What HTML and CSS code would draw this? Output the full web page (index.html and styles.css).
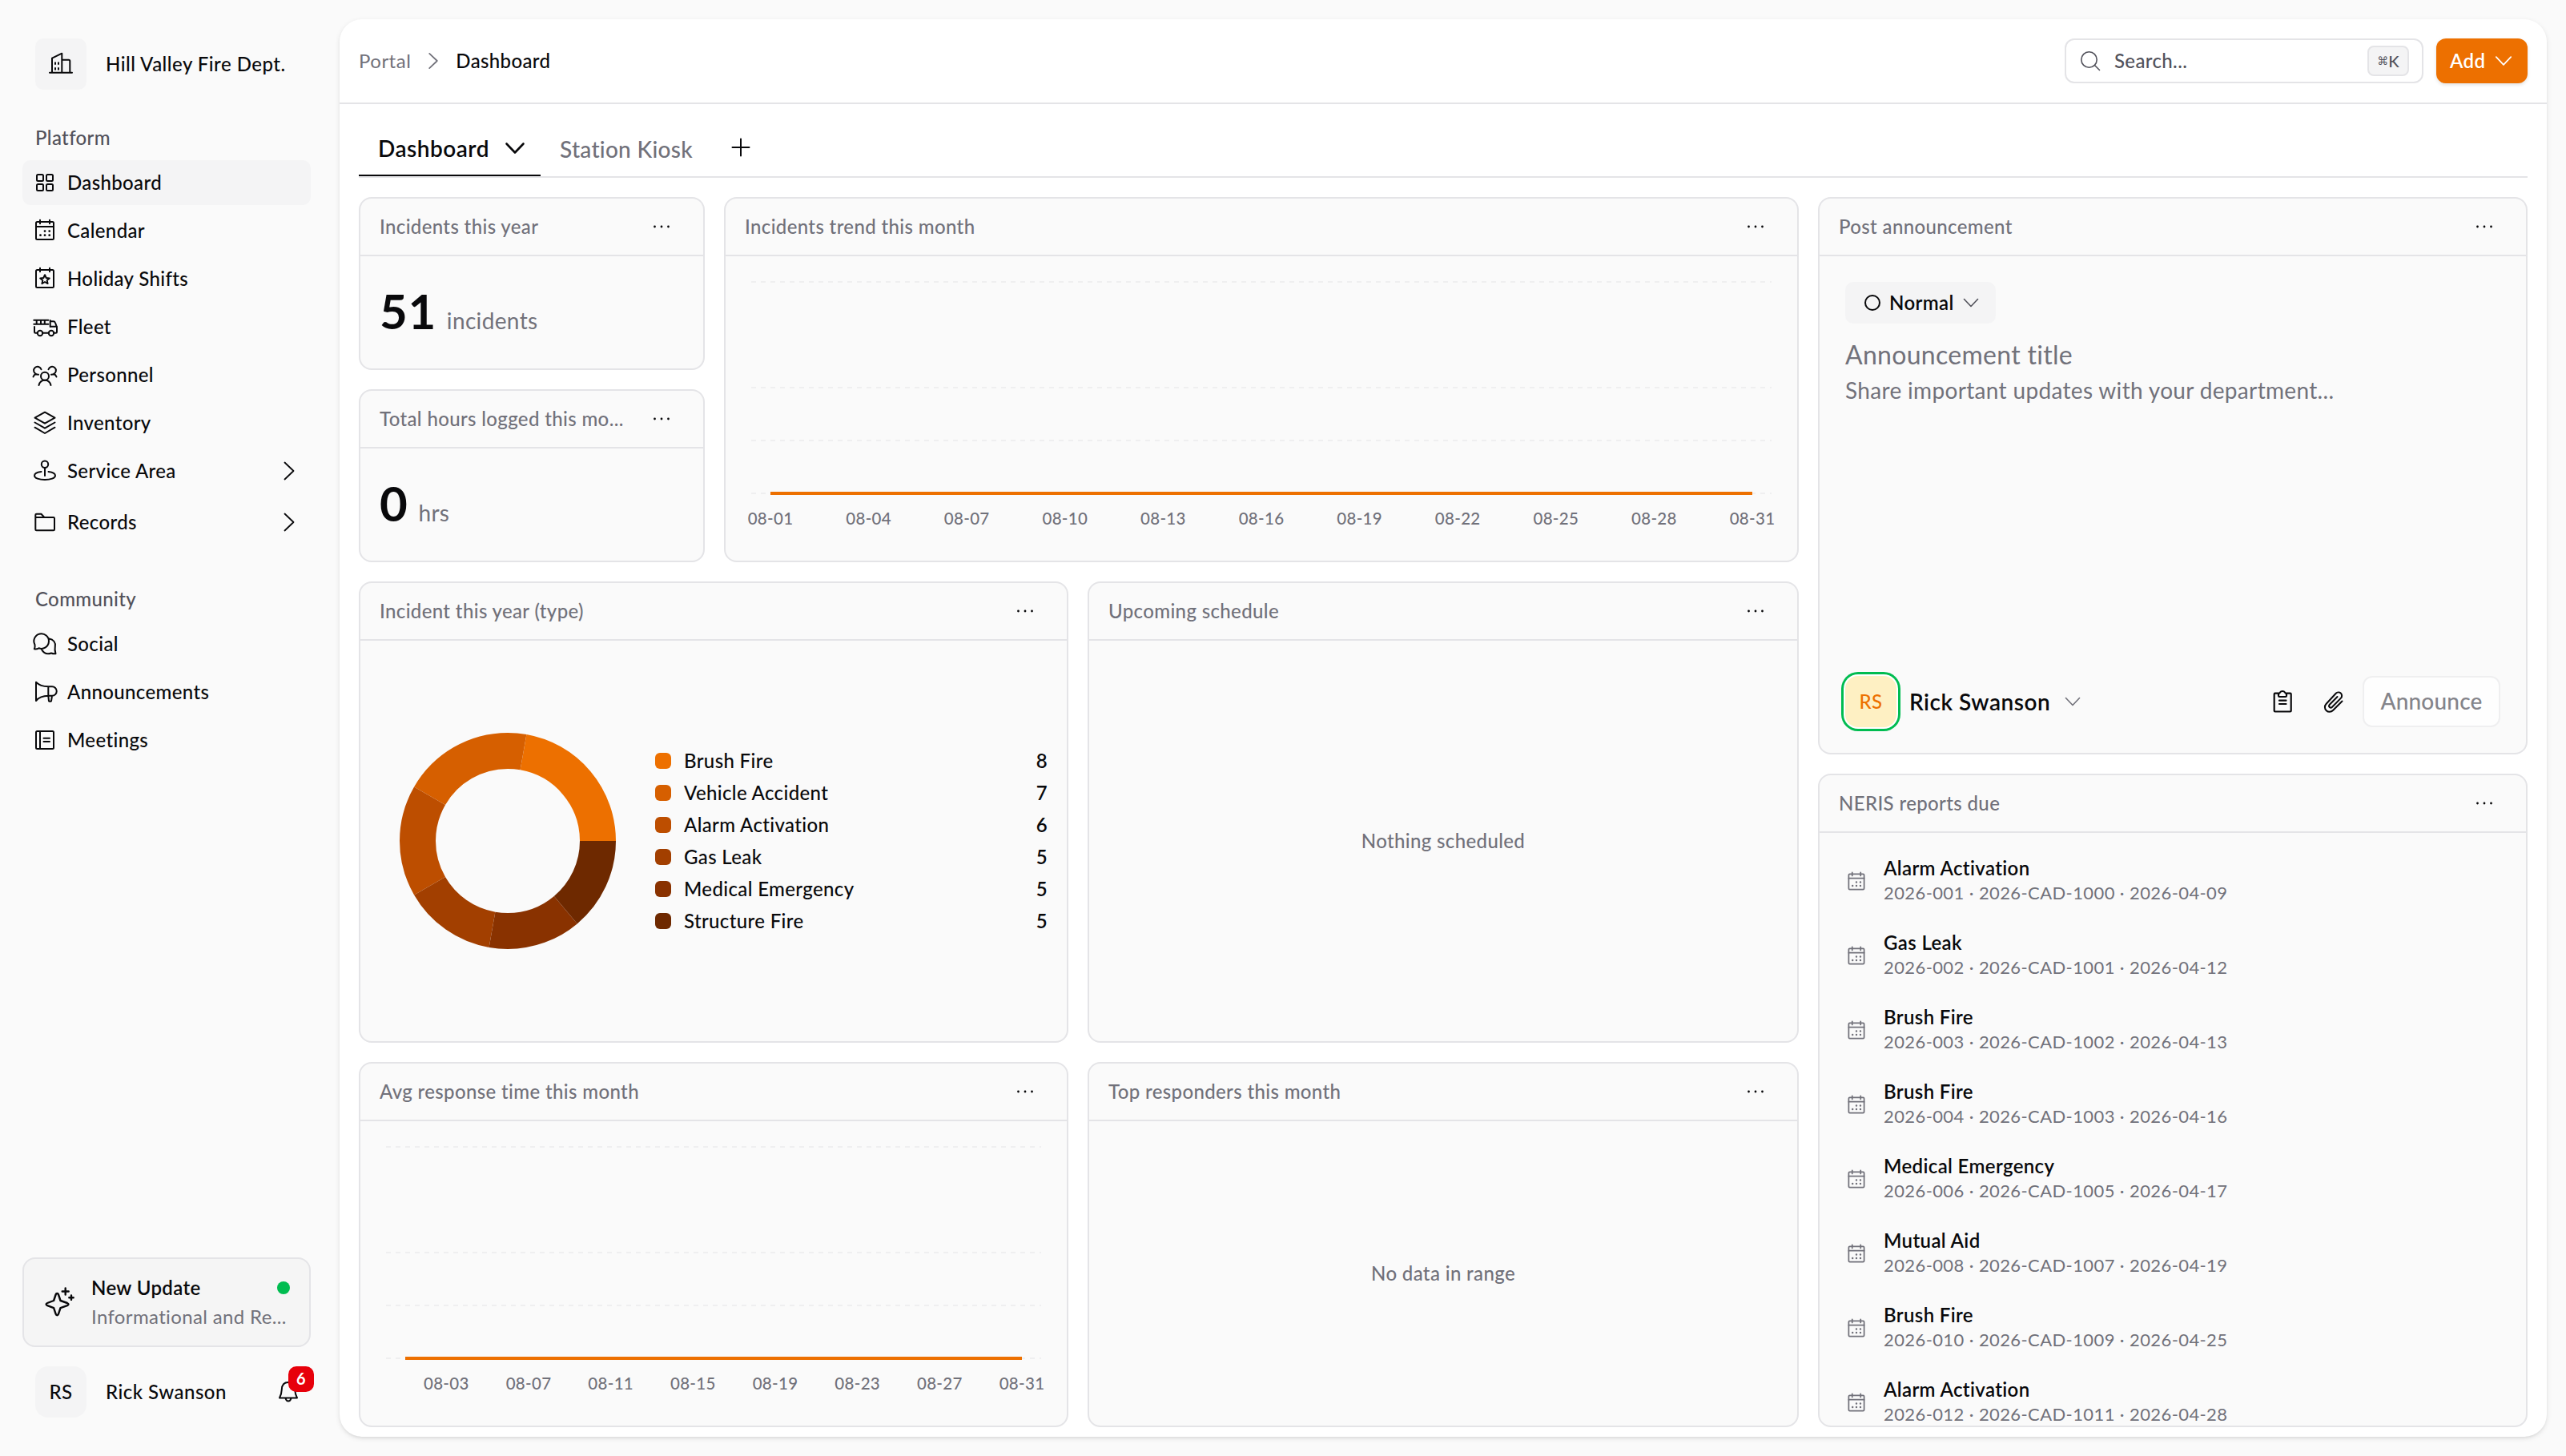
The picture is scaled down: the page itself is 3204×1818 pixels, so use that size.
FILE: index.html
```html
<!DOCTYPE html>
<html lang="en">
<head>
  <meta charset="UTF-8">
  <title>Dashboard</title>
  <link rel="stylesheet" href="styles.css">
</head>
<body>
  <!-- icon sprites -->
  <svg class="sprites">
    <symbol id="calendar" viewBox="0 0 32 32">
      <rect x="5" y="5" width="22" height="22" rx="1.5"/>
      <path d="M5 11h22M10 2.7v4.6M22 2.7v4.6"/>
      <path class="dots" d="M10.5 21.7h.01M16 21.7h.01M21.7 21.7h.01M16 16.6h.01M21.7 16.6h.01"/>
    </symbol>
    <symbol id="dots" viewBox="0 0 32 32">
      <path class="dots" d="M7.5 16h.01M16 16h.01M24.5 16h.01"/>
    </symbol>
    <symbol id="right" viewBox="0 0 32 32">
      <path d="M10.5 5.5L21.5 16l-11 10.5"/>
    </symbol>
    <symbol id="down" viewBox="0 0 32 32">
      <path d="M5.5 10.5L16 21.5l10.5-11"/>
    </symbol>
  </svg>

  <div class="sidebar">
    <div class="org">
      <div class="square">
        <svg class="icon" viewBox="0 0 32 32">
          <path d="M2 26.7h28M5 26.7v-18L17.3 2.7v24M17.3 10.7h8.5q1.5 0 1.5 1.5v14.5"/>
          <path d="M9 14.3v1.8M13 14.3v1.8M9 21v1.8M13 21v1.8"/>
        </svg>
      </div>
      <span>Hill Valley Fire Dept.</span>
    </div>

    <div class="group">Platform</div>
    <div class="nav">
      <a class="item active">
        <svg class="icon" viewBox="0 0 32 32"><rect x="6" y="6" width="8" height="8" rx="1.5"/><rect x="18" y="6" width="8" height="8" rx="1.5"/><rect x="6" y="18" width="8" height="8" rx="1.5"/><rect x="18" y="18" width="8" height="8" rx="1.5"/></svg>
        <span>Dashboard</span>
      </a>
      <a class="item"><svg class="icon"><use href="#calendar"/></svg><span>Calendar</span></a>
      <a class="item">
        <svg class="icon" viewBox="0 0 32 32"><rect x="5" y="5" width="22" height="22" rx="1.5"/><path d="M10 2.7v4.6M22 2.7v4.6"/><path d="M16 11.2l1.7 3.8 4.1.4-3.1 2.7.9 4-3.6-2.1-3.6 2.1.9-4-3.1-2.7 4.1-.4z"/></svg>
        <span>Holiday Shifts</span>
      </a>
      <a class="item">
        <svg class="icon" viewBox="0 0 32 32"><path d="M2.3 7.7h18M2.3 12.7h18M5.7 7.7v5M11 7.7v5M15.8 7.7v5M3 16v6.5q0 1.2 1.2 1.2h2.5M13.3 23.7h7.4M27.3 23.7h2.5q1.2 0 1.2-1.2v-6l-2-5.5q-.6-1.8-2.5-1.8h-3.8M22.7 8v8M22.7 15.7h8.3"/><circle cx="10" cy="24" r="3.2"/><circle cx="24" cy="24" r="3.2"/></svg>
        <span>Fleet</span>
      </a>
      <a class="item">
        <svg class="icon" viewBox="0 0 32 32"><circle cx="16" cy="17.7" r="5"/><path d="M8.5 29q1.5-6.3 7.5-6.3t7.5 6.3M11.500 9.200A4.800 4.800 0 1 0 5 15Q2.300 15.800 1.500 18.500M4.500 15.200l3.500.5M20.500 9.200A4.800 4.800 0 1 1 27 15q2.700.8 3.500 3.500M27.500 15.200l-3.500.5"/></svg>
        <span>Personnel</span>
      </a>
      <a class="item">
        <svg class="icon" viewBox="0 0 32 32"><path d="M16 2.7L28.5 9.7 16 16.7 3.5 9.7zM3.5 15.5L16 22.7l12.5-7.2M3.5 21.7L16 29l12.5-7.3"/></svg>
        <span>Inventory</span>
      </a>
      <a class="item">
        <svg class="icon" viewBox="0 0 32 32"><circle cx="16" cy="7.7" r="4.2"/><path d="M16 12v10M11.5 17C6 17.7 3 19.7 3 22c0 3 6 5 13 5s13-2 13-5c0-2.300-3-4.300-8.500-5"/></svg>
        <span>Service Area</span>
        <svg class="icon caret"><use href="#right"/></svg>
      </a>
      <a class="item folder">
        <svg class="icon" viewBox="0 0 32 32"><path d="M4.3 25V7q0-1.3 1.3-1.3h5.8l4 4.3h11.3q1.3 0 1.3 1.3V25q0 1.3-1.3 1.3H5.600q-1.300 0-1.300-1.300zM4.300 10h11"/></svg>
        <span>Records</span>
        <svg class="icon caret"><use href="#right"/></svg>
      </a>
    </div>

    <div class="group community">Community</div>
    <div class="nav">
      <a class="item">
        <svg class="icon" viewBox="0 0 32 32"><path d="M3.5 17A9.3 9.3 0 1 1 8.5 21.3Q5.5 23 2.8 22.3 4 20 3.5 17zM21.5 9.5c5 .5 8.3 5 7.3 9.7q-.8 4 .7 9-2.7.5-5.5-.7-8 3-12.3-5"/></svg>
        <span>Social</span>
      </a>
      <a class="item">
        <svg class="icon" viewBox="0 0 32 32"><path d="M5 3.7Q10 9.3 20.3 9.3H25a5.7 5.7 0 0 1 0 11.5h-4.700Q10 21 5 27zM20.300 9.300v11.500L21 27.300q1.500.8 3 0L25 20.800"/></svg>
        <span>Announcements</span>
      </a>
      <a class="item">
        <svg class="icon" viewBox="0 0 32 32"><rect x="5" y="5" width="22" height="22" rx="1.5"/><path d="M10 5v22M14.5 13.7h7.5M14.5 18h7.5"/></svg>
        <span>Meetings</span>
      </a>
    </div>

    <div class="update">
      <svg class="sparkle" viewBox="0 0 38 38"><path d="M15.3 8q1.2 0 1.7 1.5l2.5 7.5 8.5 3q1.5.6 1.5 1.6t-1.5 1.6l-8.5 3-2.5 7.5q-.5 1.5-1.7 1.5t-1.7-1.5l-2.5-7.5-8-3q-1.5-.6-1.5-1.6t1.5-1.6l8-3 2.5-7.5q.5-1.5 1.7-1.5zM25.7 1.5v8M21.7 5.5h8M33 10.5v5.4M30.3 13.2h5.4"/></svg>
      <div class="update-text">
        <div class="update-title">New Update<i class="green"></i></div>
        <div class="update-sub">Informational and Re...</div>
      </div>
    </div>

    <div class="user">
      <div class="square">RS</div>
      <span>Rick Swanson</span>
      <div class="bell">
        <svg class="icon" viewBox="0 0 32 32"><path d="M5 23.5Q7.500 19 7.800 13C8 7.500 11 4 16 4s8 3.500 8.200 9q.3 6 2.800 10.500zM12.500 24q1 3.500 3.500 3.500t3.500-3.500"/></svg>
        <div class="badge">6</div>
      </div>
    </div>
  </div>

  <div class="main">
    <div class="header">
      <span class="muted">Portal</span>
      <svg class="icon crumb"><use href="#right"/></svg>
      <span>Dashboard</span>
      <div class="search">
        <svg class="icon" viewBox="0 0 32 32"><circle cx="14.5" cy="14.5" r="9.7"/><path d="M21.5 21.5l6 6"/></svg>
        <span>Search...</span>
        <kbd><i>⌘</i>K</kbd>
      </div>
      <div class="add">Add <svg class="icon"><use href="#down"/></svg></div>
    </div>

    <div class="tabs">
      <div class="tab selected">Dashboard <svg class="icon"><use href="#down"/></svg></div>
      <div class="tab">Station Kiosk</div>
      <svg class="icon plus" viewBox="0 0 32 32"><path d="M16 5.5v21M5.5 16h21"/></svg>
    </div>

    <div class="grid">
      <div class="card stat">
        <div class="card-head"><span>Incidents this year</span><svg class="icon"><use href="#dots"/></svg></div>
        <div class="card-body"><b>51</b><span>incidents</span></div>
      </div>

      <div class="card trend">
        <div class="card-head"><span>Incidents trend this month</span><svg class="icon"><use href="#dots"/></svg></div>
        <svg class="chart" viewBox="0 0 1338 380" width="1338" height="380">
          <path class="gridline" d="M32 32H1306M32 164H1306M32 230H1306M32 296H1306"/>
          <path class="series" d="M56 296H1282"/>
          <g class="ticks">
            <text x="56" y="335">08-01</text>
            <text x="178.6" y="335">08-04</text>
            <text x="301.2" y="335">08-07</text>
            <text x="423.8" y="335">08-10</text>
            <text x="546.4" y="335">08-13</text>
            <text x="669" y="335">08-16</text>
            <text x="791.6" y="335">08-19</text>
            <text x="914.2" y="335">08-22</text>
            <text x="1036.8" y="335">08-25</text>
            <text x="1159.4" y="335">08-28</text>
            <text x="1282" y="335">08-31</text>
          </g>
        </svg>
      </div>

      <div class="card post">
        <div class="card-head"><span>Post announcement</span><svg class="icon"><use href="#dots"/></svg></div>
        <div class="post-body">
          <div class="pill"><i class="ring"></i>Normal <svg class="icon"><use href="#down"/></svg></div>
          <div class="post-title">Announcement title</div>
          <div class="post-text">Share important updates with your department...</div>
          <div class="post-foot">
            <div class="avatar">RS</div>
            <span class="author">Rick Swanson</span>
            <svg class="icon author-caret"><use href="#down"/></svg>
            <svg class="icon clipboard" viewBox="0 0 32 32"><path d="M11 5.7H6.7q-1 0-1 1V27.5q0 1 1 1h19q1 0 1-1V6.7q0-1-1-1H21M11 6q1.3 0 2-1.5 1-1.5 3-1.5t3 1.5Q19.700 6 21 6v2.700q0 1.300-1.300 1.300h-7.400Q11 10 11 8.700zM12 14.700h8.500M12 19h8.500"/></svg>
            <svg class="icon clip" viewBox="0 0 32 32"><path d="M26.5 15.5L15 27a5.800 5.800 0 0 1-8.500-8L18.700 5.800a4.200 4.200 0 0 1 6.300 5.800L13.800 23a2.200 2.200 0 0 1-3.200-3L20.500 10"/></svg>
            <div class="announce">Announce</div>
          </div>
        </div>
      </div>

      <div class="card stat">
        <div class="card-head"><span>Total hours logged this mo...</span><svg class="icon"><use href="#dots"/></svg></div>
        <div class="card-body"><b>0</b><span>hrs</span></div>
      </div>

      <div class="card tall">
        <div class="card-head"><span>Incident this year (type)</span><svg class="icon"><use href="#dots"/></svg></div>
        <div class="card-body donut-body">
          <!-- arcs are shares of 36 incidents, drawn from 3 o'clock anticlockwise -->
          <svg class="donut" viewBox="-160 -160 320 320" width="320" height="320">
            <g transform="scale(1 -1)">
              <circle r="112.5" pathLength="36" stroke="#ed7000" stroke-dasharray="8 28"/>
              <circle r="112.5" pathLength="36" stroke="#d65f00" stroke-dasharray="7 29" stroke-dashoffset="-8"/>
              <circle r="112.5" pathLength="36" stroke="#bd4e00" stroke-dasharray="6 30" stroke-dashoffset="-15"/>
              <circle r="112.5" pathLength="36" stroke="#a23f00" stroke-dasharray="5 31" stroke-dashoffset="-21"/>
              <circle r="112.5" pathLength="36" stroke="#893200" stroke-dasharray="5 31" stroke-dashoffset="-26"/>
              <circle r="112.5" pathLength="36" stroke="#6e2900" stroke-dasharray="5 31" stroke-dashoffset="-31"/>
            </g>
          </svg>
          <div class="legend">
            <div><i style="background: #ed7000"></i>Brush Fire<span>8</span></div>
            <div><i style="background: #d65f00"></i>Vehicle Accident<span>7</span></div>
            <div><i style="background: #bd4e00"></i>Alarm Activation<span>6</span></div>
            <div><i style="background: #a23f00"></i>Gas Leak<span>5</span></div>
            <div><i style="background: #893200"></i>Medical Emergency<span>5</span></div>
            <div><i style="background: #6e2900"></i>Structure Fire<span>5</span></div>
          </div>
        </div>
      </div>

      <div class="card tall">
        <div class="card-head"><span>Upcoming schedule</span><svg class="icon"><use href="#dots"/></svg></div>
        <div class="card-body empty">Nothing scheduled</div>
      </div>

      <div class="card reports">
        <div class="card-head"><span>NERIS reports due</span><svg class="icon"><use href="#dots"/></svg></div>
        <div class="report-list">
          <div class="report"><svg class="icon"><use href="#calendar"/></svg><div><b>Alarm Activation</b><p>2026-001 · 2026-CAD-1000 · 2026-04-09</p></div></div>
          <div class="report"><svg class="icon"><use href="#calendar"/></svg><div><b>Gas Leak</b><p>2026-002 · 2026-CAD-1001 · 2026-04-12</p></div></div>
          <div class="report"><svg class="icon"><use href="#calendar"/></svg><div><b>Brush Fire</b><p>2026-003 · 2026-CAD-1002 · 2026-04-13</p></div></div>
          <div class="report"><svg class="icon"><use href="#calendar"/></svg><div><b>Brush Fire</b><p>2026-004 · 2026-CAD-1003 · 2026-04-16</p></div></div>
          <div class="report"><svg class="icon"><use href="#calendar"/></svg><div><b>Medical Emergency</b><p>2026-006 · 2026-CAD-1005 · 2026-04-17</p></div></div>
          <div class="report"><svg class="icon"><use href="#calendar"/></svg><div><b>Mutual Aid</b><p>2026-008 · 2026-CAD-1007 · 2026-04-19</p></div></div>
          <div class="report"><svg class="icon"><use href="#calendar"/></svg><div><b>Brush Fire</b><p>2026-010 · 2026-CAD-1009 · 2026-04-25</p></div></div>
          <div class="report"><svg class="icon"><use href="#calendar"/></svg><div><b>Alarm Activation</b><p>2026-012 · 2026-CAD-1011 · 2026-04-28</p></div></div>
        </div>
      </div>

      <div class="card short">
        <div class="card-head"><span>Avg response time this month</span><svg class="icon"><use href="#dots"/></svg></div>
        <svg class="chart" viewBox="0 0 882 380" width="882" height="380">
          <path class="gridline" d="M32 32H850M32 164H850M32 230H850M32 296H850"/>
          <path class="series" d="M56 296H826"/>
          <g class="ticks">
            <text x="107.3" y="335">08-03</text>
            <text x="210" y="335">08-07</text>
            <text x="312.7" y="335">08-11</text>
            <text x="415.3" y="335">08-15</text>
            <text x="518" y="335">08-19</text>
            <text x="620.7" y="335">08-23</text>
            <text x="723.3" y="335">08-27</text>
            <text x="826" y="335">08-31</text>
          </g>
        </svg>
      </div>

      <div class="card short">
        <div class="card-head"><span>Top responders this month</span><svg class="icon"><use href="#dots"/></svg></div>
        <div class="card-body empty">No data in range</div>
      </div>
    </div>
  </div>
</body>
</html>
```
FILE: styles.css
```css
* {
  box-sizing: border-box;
}

body {
  margin: 0;
  width: 3204px;
  height: 1818px;
  display: flex;
  overflow: hidden;
  background: #fafafa;
  color: #09090b;
  font-family: Lato, sans-serif;
  font-size: 24px;
  font-weight: 500;
  line-height: 32px;
  letter-spacing: 0.36px;
}

.sprites {
  position: absolute;
  width: 0;
  height: 0;
}

.icon {
  width: 32px;
  height: 32px;
  flex: none;
}

svg {
  display: block;
  fill: none;
  stroke: currentColor;
  stroke-width: 2;
  stroke-linecap: round;
  stroke-linejoin: round;
}

.dots {
  stroke-width: 2.8;
}

.muted {
  color: #71717a;
}

/* sidebar */

.sidebar {
  width: 424px;
  padding: 48px 36px 48px 28px;
  display: flex;
  flex-direction: column;
}

.org,
.user {
  display: flex;
  align-items: center;
  padding-left: 16px;
  letter-spacing: 0.48px;
}

.org > span,
.user > span {
  margin-left: 24px;
}

.square {
  width: 64px;
  height: 64px;
  display: flex;
  align-items: center;
  justify-content: center;
  border-radius: 10px;
  background: #f4f4f5;
}

.group {
  margin: 42px 0 0 16px;
  height: 46px;
  line-height: 36px;
  color: #52525b;
}

.group.community {
  margin-top: 50px;
}

.nav {
  display: flex;
  flex-direction: column;
  gap: 4px;
}

.item {
  display: flex;
  align-items: center;
  height: 56px;
  padding: 0 12px;
  border-radius: 10px;
}

.item span {
  margin-left: 12px;
}

.item.active {
  background: #f4f4f5;
}

.item.folder {
  margin-top: 4px;
}

.caret {
  margin-left: auto;
  margin-right: -1px;
  stroke-width: 1.8;
}

.update {
  display: flex;
  align-items: center;
  height: 112px;
  margin-top: auto;
  padding: 0 16px 0 26px;
  border: 2px solid #e4e4e7;
  border-radius: 16px;
  background: #f5f5f5;
}

.sparkle {
  width: 38px;
  height: 38px;
  flex: none;
  stroke-width: 2.4;
}

.update-text {
  width: 250px;
  margin-left: 20px;
  line-height: 36px;
}

.update-title {
  display: flex;
  align-items: center;
  justify-content: space-between;
  font-weight: 600;
}

.green {
  width: 16px;
  height: 16px;
  margin: 0 2px 0 0;
  border-radius: 50%;
  background: #00bc50;
}

.update-sub {
  white-space: nowrap;
  color: #71717a;
  font-weight: 400;
}

.user {
  margin-top: 24px;
}

.user .square {
  border-radius: 16px;
}

.bell {
  position: relative;
  margin-left: auto;
  margin-right: 12px;
}

.badge {
  position: absolute;
  left: 16px;
  top: -16px;
  width: 32px;
  height: 32px;
  border-radius: 10px;
  background: #e7000b;
  color: #fff;
  font-size: 20px;
  font-weight: 700;
  line-height: 30px;
  text-align: center;
}

/* main panel */

.main {
  width: 2756px;
  height: 1770px;
  margin-top: 24px;
  border-radius: 28px;
  background: #fff;
  box-shadow: 0 2px 6px rgba(0, 0, 0, 0.1), 0 2px 4px -2px rgba(0, 0, 0, 0.1);
}

.header {
  display: flex;
  align-items: center;
  height: 106px;
  padding: 0 24px;
  border-bottom: 2px solid #e4e4e7;
}

.header .muted {
  font-weight: 400;
  letter-spacing: 0.5px;
}

.crumb {
  width: 28px;
  height: 28px;
  margin: 0 14px 0 14px;
  color: #71717a;
}

.search {
  display: flex;
  align-items: center;
  width: 448px;
  height: 56px;
  margin-left: auto;
  padding: 0 16px;
  border: 2px solid #e4e4e7;
  border-radius: 12px;
  color: #52525b;
}

.search .icon {
  margin-left: -2px;
  stroke-width: 1.6;
}

.search span {
  margin-left: 14px;
}

kbd {
  display: flex;
  align-items: center;
  justify-content: center;
  width: 52px;
  height: 38px;
  margin-left: auto;
  border: 2px solid #e4e4e7;
  border-radius: 8px;
  background: #f4f4f5;
  font: 500 20px Lato, sans-serif;
  letter-spacing: 0;
}

kbd i {
  font: 14px "DejaVu Sans", sans-serif;
}

.add {
  display: flex;
  align-items: center;
  width: 114px;
  height: 56px;
  margin-left: 16px;
  padding-left: 17px;
  border-radius: 12px;
  background: #ed7000;
  box-shadow: 0 2px 4px rgba(0, 0, 0, 0.12);
  color: #fff;
  font-weight: 600;
}

.add .icon {
  width: 28px;
  height: 28px;
  margin-left: 9px;
}

.tabs {
  display: flex;
  height: 92px;
  margin: 0 24px;
  border-bottom: 2px solid #e4e4e7;
}

.tab {
  display: flex;
  align-items: center;
  height: 90px;
  padding: 22px 24px 0;
  color: #71717a;
  font-size: 28px;
  letter-spacing: 0.28px;
}

.tab.selected {
  width: 227px;
  padding-top: 21px;
  border-bottom: 2px solid #09090b;
  color: #09090b;
  font-weight: 600;
  letter-spacing: 0.5px;
}

.tab .icon {
  margin-left: 16px;
  stroke-width: 2.6;
}

.plus {
  margin: 38px 0 0 20px;
}

.grid {
  display: grid;
  grid-template-columns: 432px 430px 432px 432px 1fr 1fr;
  grid-template-rows: repeat(13, 96px);
  gap: 24px;
  padding: 24px;
}

.card {
  display: flex;
  flex-direction: column;
  min-width: 0;
  min-height: 0;
  overflow: hidden;
  border: 2px solid #e4e4e7;
  border-radius: 16px;
  background: #fafafa;
}

.stat {
  grid-column: 1;
  grid-row: span 2;
}

.trend {
  grid-column: 2 / 5;
  grid-row: 1 / 5;
}

.post {
  grid-column: 5 / 7;
  grid-row: 1 / 7;
}

.reports {
  grid-column: 5 / 7;
  grid-row: 7 / 14;
}

.tall {
  grid-column: span 2;
  grid-row: 5 / 10;
}

.short {
  grid-column: span 2;
  grid-row: 10 / 14;
}

.card-head {
  display: flex;
  flex: none;
  align-items: center;
  height: 72px;
  padding: 0 36px 0 24px;
  border-bottom: 2px solid #e4e4e7;
  color: #71717a;
}

.card-head span {
  flex: 1;
  white-space: nowrap;
}

.card-head .icon {
  color: #09090b;
}

.card-body {
  display: flex;
  flex: 1;
  align-items: center;
  padding: 0 24px;
}

.stat .card-body {
  align-items: baseline;
  padding-top: 32px;
  line-height: 72px;
}

.stat b {
  font-size: 60px;
  font-weight: 700;
  letter-spacing: 0.6px;
}

.stat .card-body span {
  margin-left: 13px;
  color: #71717a;
  font-size: 28px;
  font-weight: 400;
}

.card-body.empty {
  justify-content: center;
  color: #71717a;
}

/* charts */

.chart {
  stroke-linecap: butt;
}

.gridline {
  stroke: #efeff0;
  stroke-dasharray: 6 6;
}

.series {
  stroke: #ed7000;
  stroke-width: 4;
}

.ticks {
  fill: #71717a;
  stroke: none;
  font-size: 20.5px;
  text-anchor: middle;
  letter-spacing: 0.3px;
}

.donut {
  flex: none;
  stroke-width: 45;
  stroke-linecap: butt;
}

.legend {
  flex: 1;
  margin-left: 24px;
}

.legend div {
  display: flex;
  align-items: center;
  height: 40px;
}

.legend i {
  width: 20px;
  height: 20px;
  margin-right: 16px;
  border-radius: 6px;
}

.legend span {
  margin-left: auto;
  font-weight: 600;
}

/* post announcement */

.post-body {
  display: flex;
  flex: 1;
  flex-direction: column;
  padding: 32px;
}

.pill {
  display: flex;
  align-items: center;
  width: 188px;
  height: 52px;
  padding-left: 24px;
  border-radius: 10px;
  background: #f4f4f5;
  font-weight: 600;
}

.ring {
  width: 20px;
  height: 20px;
  margin-right: 11px;
  border: 2px solid #09090b;
  border-radius: 50%;
}

.pill .icon {
  width: 26px;
  height: 26px;
  margin-left: 8px;
  color: #52525b;
}

.post-title,
.post-text {
  color: #71717a;
  font-size: 32px;
  line-height: 40px;
  margin-top: 19px;
  letter-spacing: 0.3px;
  font-weight: 400;
}

.post-text {
  margin-top: 4px;
  font-size: 28px;
  letter-spacing: 0.33px;
}

.post-foot {
  display: flex;
  align-items: center;
  height: 64px;
  margin-top: auto;
}

.avatar {
  width: 64px;
  height: 64px;
  border-radius: 16px;
  background: #fef0c3;
  box-shadow: 0 0 0 2px #fff, 0 0 0 5px #00bc50;
  color: #ed7000;
  line-height: 63px;
  text-align: center;
}

.author {
  margin-left: 16px;
  font-size: 28px;
  font-weight: 600;
  letter-spacing: 0.5px;
}

.author-caret {
  width: 26px;
  height: 26px;
  margin-left: 15px;
  color: #71717a;
}

.clipboard {
  margin-left: auto;
  stroke-width: 2.2;
}

.clip {
  margin: 0 20px 0 32px;
}

.announce {
  width: 172px;
  height: 64px;
  border: 2px solid #efeff0;
  border-radius: 12px;
  background: #fefefe;
  color: #84848a;
  font-size: 28px;
  line-height: 58px;
  letter-spacing: 0.2px;
  text-align: center;
}

/* reports */

.report-list {
  padding: 14px 32px;
}

.report {
  display: flex;
  align-items: center;
  height: 93px;
}

.report .icon {
  width: 28px;
  height: 28px;
  margin-right: 20px;
  color: #71717a;
}

.report div {
  padding-bottom: 4px;
}

.report b {
  display: block;
  font-weight: 600;
  line-height: 31px;
}

.report p {
  margin: 0;
  color: #71717a;
  font-size: 22px;
  font-weight: 400;
  line-height: 31px;
  letter-spacing: 0.4px;
}
```
